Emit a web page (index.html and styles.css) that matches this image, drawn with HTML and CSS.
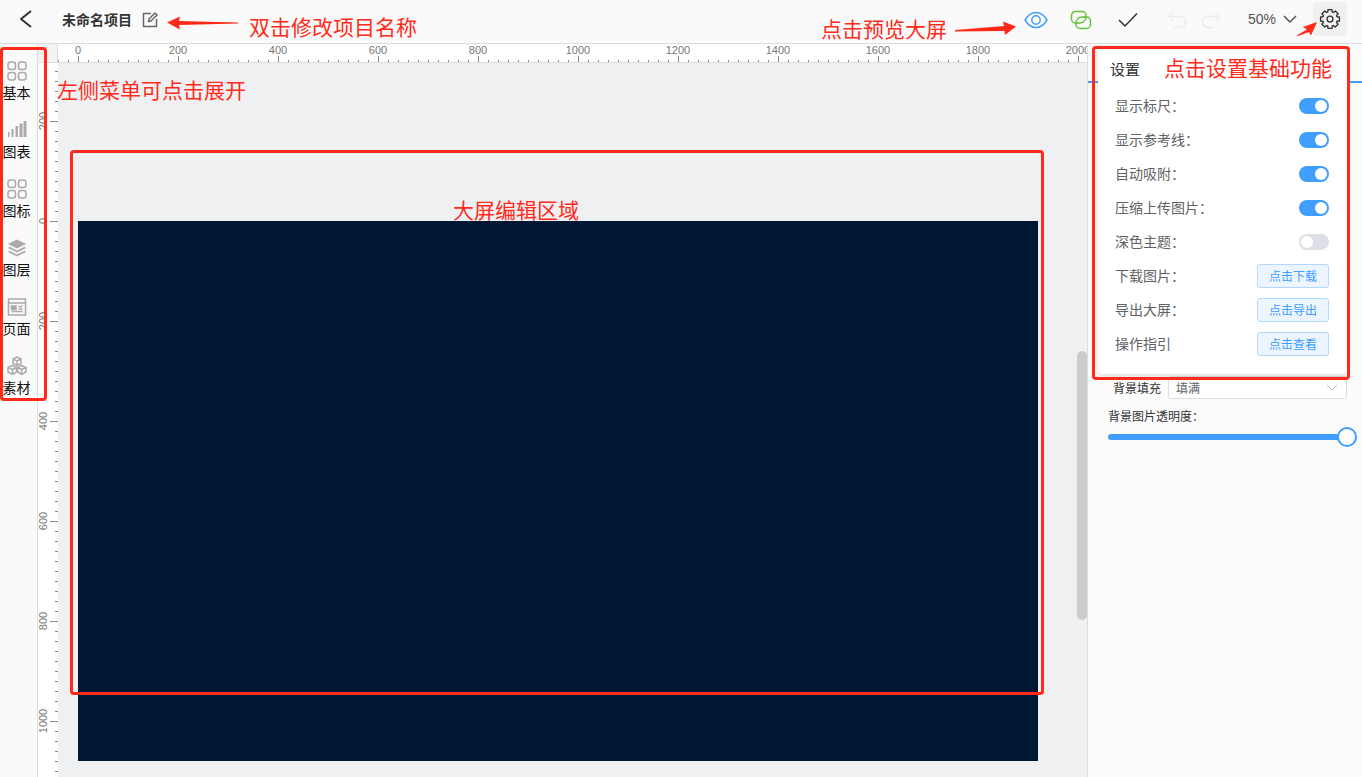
FILE: index.html
```html
<!DOCTYPE html>
<html lang="zh-CN">
<head>
  <meta charset="UTF-8" />
  <title>大屏编辑器</title>
  <link rel="stylesheet" href="styles.css">
</head>
<body>

<header class="topbar">
  <svg class="back-icon" width="16" height="20" viewBox="0 0 16 20"><path d="M13 2 3 10l10 8" /></svg>
  <span class="project-name">未命名项目</span>
  <svg class="edit-icon" width="16" height="16" viewBox="0 0 16 16"><path d="M9 1.500H1.500v13h13V7M6.500 9.500l.5-2.500 6-6 2 2-6 6z" /></svg>
  <div class="spacer"></div>
  <svg class="tool eye" width="24" height="18" viewBox="0 0 24 18"><path d="M1 9c3-5 7-7.500 11-7.500S20 4 23 9c-3 5-7 7.500-11 7.500S4 14 1 9z" /><circle cx="12" cy="9" r="4.200" /></svg>
  <svg class="tool link" width="22" height="20" viewBox="0 0 22 20"><path d="M8 13H5.500A4 4 0 0 1 1.500 9V5.500a4 4 0 0 1 4-4H12a4 4 0 0 1 4 4V6" /><path d="M14 7h2.500a4 4 0 0 1 4 4v3.500a4 4 0 0 1-4 4H10a4 4 0 0 1-4-4V14" /><path d="M6 14c0-3.500 2-7 6-7h4M16 6c0 3.500-2 7-6 7H6" /></svg>
  <svg class="tool check" width="20" height="16" viewBox="0 0 20 16"><path d="M1 8l6 6L19 1.500" /></svg>
  <svg class="tool history" width="20" height="18" viewBox="0 0 20 18"><path d="M6 1 1.500 5.500 6 10M2 5.500h11a5.500 5.500 0 0 1 0 11H7" /></svg>
  <svg class="tool history" width="20" height="18" viewBox="0 0 20 18"><path d="M14 1l4.500 4.500L14 10M18 5.500H7a5.500 5.500 0 0 0 0 11h6" /></svg>
  <span class="zoom-value">50%</span>
  <svg class="zoom-arrow" width="14" height="8" viewBox="0 0 14 8"><path d="M1 1l6 6 6-6" /></svg>
  <button class="gear-btn">
    <svg width="22" height="22" viewBox="0 0 24 24"><path d="M9.530 4.390 9.820 1.730H14.180L14.470 4.390 15.630 4.870 17.720 3.190 20.810 6.280 19.130 8.370 19.610 9.530 22.270 9.820V14.180L19.610 14.470 19.130 15.630 20.810 17.720 17.720 20.810 15.630 19.130 14.470 19.610 14.180 22.270H9.820L9.530 19.610 8.370 19.130 6.280 20.810 3.190 17.720 4.870 15.630 4.390 14.470 1.730 14.180V9.820L4.390 9.530 4.870 8.370 3.190 6.280 6.280 3.190 8.370 4.870z" /><circle cx="12" cy="12" r="3.200" /></svg>
  </button>
</header>

<div class="workspace">
  <nav class="sidebar">
    <div class="menu-item">
      <svg width="20" height="20" viewBox="0 0 20 20"><rect x="1" y="1" width="7.500" height="7.500" rx="2.500" /><rect x="11.500" y="1" width="7.500" height="7.500" rx="2.500" /><rect x="1" y="11.500" width="7.500" height="7.500" rx="2.500" /><rect x="11.500" y="11.500" width="7.500" height="7.500" rx="2.500" /></svg>
      <span>基本</span>
    </div>
    <div class="menu-item">
      <svg class="solid" width="20" height="20" viewBox="0 0 20 20"><rect x="1" y="12" width="1.500" height="5" /><rect x="4.500" y="9" width="2" height="8" /><rect x="8.500" y="6" width="2.500" height="11" /><rect x="12.500" y="3.500" width="3" height="13.500" /><rect x="16.500" y="1" width="3" height="16" /></svg>
      <span>图表</span>
    </div>
    <div class="menu-item">
      <svg width="20" height="20" viewBox="0 0 20 20"><rect x="1" y="1" width="7.500" height="7.500" rx="2.500" /><rect x="11.500" y="1" width="7.500" height="7.500" rx="2.500" /><rect x="1" y="11.500" width="7.500" height="7.500" rx="2.500" /><rect x="11.500" y="11.500" width="7.500" height="7.500" rx="2.500" /></svg>
      <span>图标</span>
    </div>
    <div class="menu-item">
      <svg class="solid" width="20" height="20" viewBox="0 0 20 20"><path d="M10 1.500 19 6l-9 4.500L1 6z" /><path d="M2.500 8.800 10 12.500l7.500-3.700L19 10l-9 4.500L1 10z" /><path d="M2.500 12.800 10 16.500l7.500-3.700L19 14l-9 4.500L1 14z" /></svg>
      <span>图层</span>
    </div>
    <div class="menu-item">
      <svg width="20" height="20" viewBox="0 0 20 20"><rect x="1.500" y="2" width="17" height="16" /><path d="M1.500 6h17M4.500 14.500h11M11.500 9.500h4M11.500 12h4" /><rect class="fill" x="4.500" y="9" width="4.500" height="3.500" /></svg>
      <span>页面</span>
    </div>
    <div class="menu-item">
      <svg width="20" height="20" viewBox="0 0 20 20"><path d="M10 1l4 2v4.500l-4 2-4-2V3zM6 3l4 2 4-2M10 5v4.500M5.500 9.500l4 2V16l-4 2.500-4.500-2.500v-4.500zM1 11.500l4.500 2 4-2M5.500 13.500v5M14.500 9.500l4.500 2V16l-4.500 2.500-4-2.500v-4.500zM10.500 11.500l4 2 4.500-2M14.500 13.500v5" /></svg>
      <span>素材</span>
    </div>
  </nav>

  <div class="stage">
    <div class="ruler-top">
      <div class="ruler-corner"></div>
      <svg class="ruler" width="1029" height="18" viewBox="0 0 1029 18">
        <line class="tick" x1="0" y1="17" x2="1029" y2="17" stroke-dasharray="1 9" />
        <line class="tick major" x1="20" y1="15" x2="1029" y2="15" stroke-dasharray="1 99" />
        <text x="20" y="10">0</text>
        <text x="120" y="10">200</text>
        <text x="220" y="10">400</text>
        <text x="320" y="10">600</text>
        <text x="420" y="10">800</text>
        <text x="520" y="10">1000</text>
        <text x="620" y="10">1200</text>
        <text x="720" y="10">1400</text>
        <text x="820" y="10">1600</text>
        <text x="920" y="10">1800</text>
        <text x="1020" y="10">2000</text>
      </svg>
    </div>
    <div class="stage-body">
      <svg class="ruler ruler-left" width="20" height="714" viewBox="0 0 20 714">
        <line class="tick" x1="18.500" y1="8" x2="18.500" y2="714" stroke-dasharray="1 9" />
        <line class="tick major" x1="16" y1="58" x2="16" y2="714" stroke-dasharray="1 99" />
        <text transform="rotate(-90 9 58)" x="9" y="58">200</text>
        <text transform="rotate(-90 9 158)" x="9" y="158">0</text>
        <text transform="rotate(-90 9 258)" x="9" y="258">200</text>
        <text transform="rotate(-90 9 358)" x="9" y="358">400</text>
        <text transform="rotate(-90 9 458)" x="9" y="458">600</text>
        <text transform="rotate(-90 9 558)" x="9" y="558">800</text>
        <text transform="rotate(-90 9 658)" x="9" y="658">1000</text>
      </svg>
      <div class="canvas">
        <div class="screen"></div>
        <div class="scrollbar"></div>
      </div>
    </div>
  </div>

  <aside class="panel">
    <div class="panel-tabs"></div>
    <div class="field-row">
      <label>背景填充</label>
      <div class="select">填满
        <svg width="12" height="7" viewBox="0 0 12 7"><path d="M1 1l5 5 5-5" /></svg>
      </div>
    </div>
    <div class="opacity-label">背景图片透明度：</div>
    <div class="slider"><div class="slider-thumb"></div></div>
  </aside>
</div>

<div class="settings">
  <div class="settings-title">设置</div>
  <div class="setting-row"><span>显示标尺：</span><div class="switch on"></div></div>
  <div class="setting-row"><span>显示参考线：</span><div class="switch on"></div></div>
  <div class="setting-row"><span>自动吸附：</span><div class="switch on"></div></div>
  <div class="setting-row"><span>压缩上传图片：</span><div class="switch on"></div></div>
  <div class="setting-row"><span>深色主题：</span><div class="switch"></div></div>
  <div class="setting-row"><span>下载图片：</span><button class="small-btn">点击下载</button></div>
  <div class="setting-row"><span>导出大屏：</span><button class="small-btn">点击导出</button></div>
  <div class="setting-row"><span>操作指引</span><button class="small-btn">点击查看</button></div>
</div>

<!-- red notes drawn over the screenshot -->
<div class="frame frame-menu"></div>
<div class="frame frame-edit"></div>
<div class="frame frame-settings"></div>
<span class="note note-name">双击修改项目名称</span>
<span class="note note-preview">点击预览大屏</span>
<span class="note note-settings">点击设置基础功能</span>
<span class="note note-menu">左侧菜单可点击展开</span>
<span class="note note-edit">大屏编辑区域</span>
<svg class="arrows" width="1362" height="60" viewBox="0 0 1362 60">
  <path d="M167 22.500 180 16.500 179 21 238 22.500v1L179 25l1 4.500z" />
  <path d="M1016 26.500 1003 21.500 1004 26 955 30v1.500L1004.500 31l.5 4z" />
  <path d="M1317 22 1303 27 1307 29.500 1296.500 35.500 1298 36 1309 32 1311 35.500z" />
</svg>

</body>
</html>
```

FILE: styles.css
```css
* {
  box-sizing: border-box;
}
body {
  margin: 0;
  width: 1362px;
  height: 777px;
  overflow: hidden;
  position: relative;
  font-family: "Liberation Sans", "Noto Sans CJK SC", sans-serif;
  background-color: #fbfbfb;
  color: #333;
}
svg {
  display: block;
  fill: none;
}

/* top bar */
.topbar {
  height: 44px;
  display: flex;
  align-items: center;
  background-color: #fafafa;
  border-bottom: 1px solid #ddd;
  padding-left: 18px;
  padding-right: 15px;
}
.topbar svg path,
.topbar svg circle {
  fill: none;
  stroke-width: 1.5;
  stroke-linejoin: round;
}
.back-icon {
  margin-top: -6px;
  stroke: #333;
}
.topbar .back-icon path {
  stroke-width: 2;
}
.project-name {
  margin-left: 28px;
  margin-top: -5px;
  font-size: 14px;
  font-weight: bold;
  color: #333;
}
.edit-icon {
  margin-left: 10px;
  margin-top: -4px;
  stroke: #666;
}
.spacer {
  flex: 1;
}
.tool {
  margin-top: -4px;
}
.eye {
  stroke: #409eff;
}
.link {
  margin-left: 22px;
  stroke: #67c23a;
}
.check {
  margin-left: 26px;
  stroke: #333;
}
.history {
  margin-left: 29px;
  stroke: #ececec;
}
.history + .history {
  margin-left: 14px;
}
.zoom-value {
  margin-left: 27px;
  margin-top: -5px;
  font-size: 14px;
  color: #555;
}
.zoom-arrow {
  margin-left: 7px;
  margin-top: -5px;
  stroke: #555;
}
.gear-btn {
  width: 34px;
  height: 34px;
  margin-left: 16px;
  margin-top: -6px;
  padding: 6px;
  border: none;
  border-radius: 4px;
  background-color: #f0f0f0;
  stroke: #333;
}

/* main columns */
.workspace {
  display: flex;
  height: 733px;
}
.sidebar {
  width: 38px;
  flex-shrink: 0;
  padding-top: 17px;
  background-color: #fafafa;
  border-right: 1px solid #ddd;
}
.menu-item {
  height: 59px;
  display: flex;
  flex-direction: column;
  align-items: center;
  font-size: 14px;
  color: #111;
  stroke: #aaa;
  padding-right: 4px;
}
.menu-item svg {
  stroke-width: 1.5;
  margin-bottom: 3px;
}
.menu-item span {
  line-height: 18px;
}
.menu-item .solid {
  fill: #aaa;
  stroke: none;
}
.menu-item .fill {
  fill: #aaa;
}

.stage {
  width: 1049px;
  flex-shrink: 0;
  display: flex;
  flex-direction: column;
}
.ruler-top {
  display: flex;
  height: 19px;
  background-color: #fff;
  border-bottom: 1px solid #ddd;
}
.ruler-corner {
  width: 20px;
  background-color: #f3f3f3;
  border-right: 1px solid #ddd;
}
.ruler {
  background-color: #fff;
  flex-shrink: 0;
}
.ruler text {
  fill: #777;
  font-size: 11px;
  text-anchor: middle;
}
.tick {
  stroke: #888;
  stroke-width: 2;
}
.tick.major {
  stroke-width: 6;
}
.ruler-left .tick {
  stroke-width: 3;
}
.ruler-left .tick.major {
  stroke-width: 8;
}
.stage-body {
  flex: 1;
  display: flex;
  overflow: hidden;
}
.canvas {
  flex: 1;
  position: relative;
  background-color: #eff0f2;
  padding-top: 158px;
  padding-left: 20px;
}
.screen {
  width: 960px;
  height: 540px;
  background-color: #001635;
}
.scrollbar {
  position: absolute;
  top: 288px;
  right: 0;
  width: 10px;
  height: 269px;
  border-radius: 5px;
  background-color: #ccc;
}

/* right panel */
.panel {
  flex: 1;
  background-color: #fbfbfb;
  border-left: 1px solid #ddd;
}
.panel-tabs {
  height: 39px;
  border-bottom: 2px solid #409eff;
}
.field-row {
  display: flex;
  align-items: center;
  margin-top: 293px;
  padding-left: 25px;
  padding-right: 15px;
  font-size: 12px;
}
.field-row label {
  width: 55px;
}
.select {
  flex: 1;
  height: 23px;
  padding: 0 8px 0 7px;
  display: flex;
  align-items: center;
  justify-content: space-between;
  background-color: #fff;
  border: 1px solid #dcdfe6;
  border-radius: 3px;
  color: #606266;
  stroke: #c0c4cc;
}
.opacity-label {
  margin-top: 8px;
  padding-left: 20px;
  font-size: 12px;
}
.slider {
  position: relative;
  height: 6px;
  margin: 10px 15px 0 20px;
  border-radius: 3px;
  background-color: #409eff;
}
.slider-thumb {
  position: absolute;
  right: -10px;
  top: -7px;
  width: 20px;
  height: 20px;
  border: 2px solid #409eff;
  border-radius: 50%;
  background-color: #fff;
}

/* settings popover */
.settings {
  position: absolute;
  left: 1098px;
  top: 48px;
  width: 249px;
  height: 326px;
  padding: 11px 18px 0 17px;
  background-color: #fff;
  border-radius: 4px;
  box-shadow: 0 2px 6px rgba(0,0,0,0.15);
}
.settings-title {
  margin-left: -5px;
  font-size: 15px;
  line-height: 22px;
  color: #333;
  margin-bottom: 8px;
}
.setting-row {
  height: 34px;
  display: flex;
  align-items: center;
  justify-content: space-between;
  font-size: 14px;
  color: #606266;
}
.setting-row span {
  margin-bottom: 3px;
}
.switch {
  position: relative;
  width: 30px;
  height: 16px;
  border-radius: 8px;
  background-color: #dcdfe6;
}
.switch::after {
  content: "";
  position: absolute;
  left: 2px;
  top: 2px;
  width: 12px;
  height: 12px;
  border-radius: 50%;
  background-color: #fff;
}
.switch.on {
  background-color: #409eff;
}
.switch.on::after {
  left: 16px;
}
.small-btn {
  width: 72px;
  height: 24px;
  padding: 0 0 2px;
  font-family: inherit;
  font-size: 12px;
  color: #409eff;
  background-color: #ecf5ff;
  border: 1px solid #b3d8ff;
  border-radius: 3px;
}

/* red notes */
.frame {
  position: absolute;
  border: 3px solid #ff2a1a;
  border-radius: 4px;
}
.frame-menu {
  left: 0;
  top: 47px;
  width: 47px;
  height: 354px;
}
.frame-edit {
  left: 70px;
  top: 150px;
  width: 974px;
  height: 545px;
}
.frame-settings {
  left: 1092px;
  top: 46px;
  width: 258px;
  height: 334px;
}
.note {
  position: absolute;
  font-size: 21px;
  line-height: 28px;
  color: #ff2a1a;
  white-space: nowrap;
}
.note-name {
  left: 249px;
  top: 14px;
}
.note-preview {
  left: 821px;
  top: 16px;
}
.note-settings {
  left: 1164px;
  top: 55px;
}
.note-menu {
  left: 57px;
  top: 77px;
}
.note-edit {
  left: 453px;
  top: 197px;
}
.arrows {
  position: absolute;
  left: 0;
  top: 0;
  fill: #ff2a1a;
}
```
